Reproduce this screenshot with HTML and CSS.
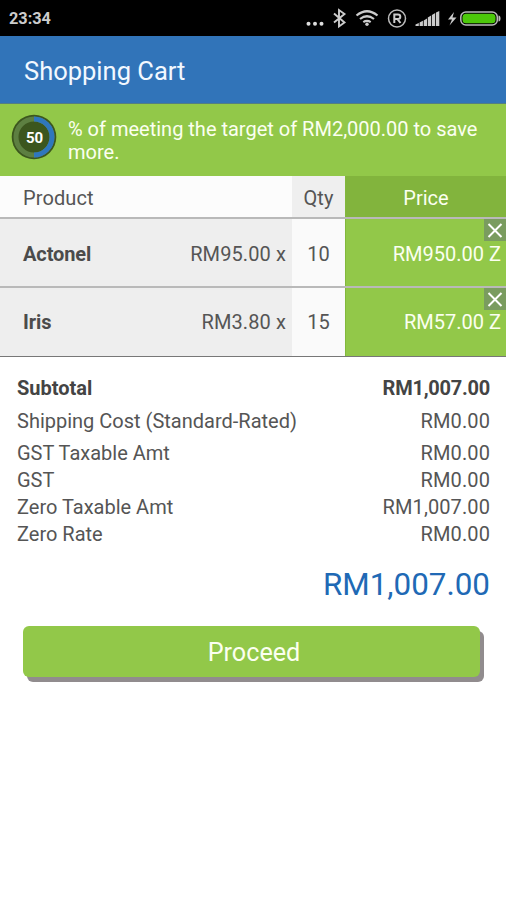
FILE: index.html
```html
<!DOCTYPE html>
<html lang="en">
<head>
<meta charset="utf-8">
<title>Shopping Cart</title>
<link rel="stylesheet" href="styles.css">
</head>
<body>
<div class="status">
  <span class="clock">23:34</span>
  <svg class="status-icons" width="200" height="36" viewBox="0 0 200 36" fill="none">
    <g fill="#ddd"><circle cx="2.500" cy="23.800" r="2"/><circle cx="9" cy="23.800" r="2"/><circle cx="15.500" cy="23.800" r="2"/></g>
    <path d="M28 13.500l10.500 9-5.500 4V10l5.500 4-10.500 8.500" stroke="#ccc" stroke-width="1.900"/>
    <g stroke="#ccc" stroke-width="2.200"><path d="M50.500 15.500q10.500-8.500 21 0M54 19q7-5.500 14 0M57.300 22.200q3.700-2.500 7.400 0"/></g>
    <circle cx="61" cy="24.200" r="1.700" fill="#ccc"/>
    <circle cx="91" cy="18.500" r="8.500" stroke="#bbb" stroke-width="1.500"/>
    <path d="M88.300 23v-8.500h3.600q2.400 0 2.400 2.300t-2.400 2.300h-3.600m3.200 0l3 3.900" stroke="#ccc" stroke-width="2"/>
    <path d="M109.500 26v-1.500l3.300-1.500v3zM113.600 26v-3.500l3.300-1.700V26zM117.700 26v-5.500l3.300-2V26zM121.800 26v-8.500l3.300-2V26zM125.900 26V15l3.300-2v13zM130 26V12.500l3.300-1.500v15z" fill="#ccc"/>
    <path d="M148 12l-6 7.500h4l-2.500 6 7-8h-4z" fill="#ccc"/>
    <rect x="154.800" y="12" width="36.500" height="13" rx="5" stroke="#bbb" stroke-width="1.500"/>
    <rect x="156.500" y="13.700" width="33" height="9.600" rx="3.500" fill="#4cc80a"/>
    <path d="M192.500 15.500q2 0 2 3t-2 3" fill="#bbb"/>
  </svg>
</div>
<header class="appbar"><h1>Shopping Cart</h1></header>
<section class="banner">
  <svg class="gauge" width="46" height="46" viewBox="0 0 46 46">
    <circle cx="23" cy="23" r="22.300" fill="#3c561e"/>
    <circle cx="23" cy="23" r="18" fill="none" stroke="#5d7f41" stroke-width="5"/>
    <path d="M23 5a18 18 0 0 1 0 36" fill="none" stroke="#2f77bd" stroke-width="5"/>
    <text x="23.500" y="28.500" text-anchor="middle" class="gauge-text">50</text>
  </svg>
  <p>% of meeting the target of RM2,000.00 to save more.</p>
</section>
<main>
  <div class="row head">
    <div class="product"><span>Product</span></div><div class="qty">Qty</div><div class="price">Price</div>
  </div>
  <div class="row">
    <div class="product"><b>Actonel</b><span>RM95.00 x</span></div><div class="qty">10</div>
    <div class="price">RM950.00 Z<svg class="close" width="22" height="22" viewBox="0 0 22 22"><path d="M4.500 5l13 13m0-13l-13 13"/></svg></div>
  </div>
  <div class="row last">
    <div class="product"><b>Iris</b><span>RM3.80 x</span></div><div class="qty">15</div>
    <div class="price">RM57.00 Z<svg class="close" width="22" height="22" viewBox="0 0 22 22"><path d="M4.500 5l13 13m0-13l-13 13"/></svg></div>
  </div>
  <section class="summary">
    <div class="line subtotal"><span>Subtotal</span><span class="amount">RM1,007.00</span></div>
    <div class="line shipping"><span>Shipping Cost (Standard-Rated)</span><span>RM0.00</span></div>
    <div class="line"><span>GST Taxable Amt</span><span>RM0.00</span></div>
    <div class="line"><span>GST</span><span>RM0.00</span></div>
    <div class="line"><span>Zero Taxable Amt</span><span>RM1,007.00</span></div>
    <div class="line"><span>Zero Rate</span><span>RM0.00</span></div>
    <div class="total">RM1,007.00</div>
  </section>
  <button class="proceed">Proceed</button>
</main>
</body>
</html>
```

FILE: styles.css
```css
* { box-sizing: border-box; }
body { margin: 0; min-height: 900px; background: #fff; color: #555; font: 20px/27px Roboto, sans-serif; }
.status { height: 36px; background: #000; display: flex; align-items: center; justify-content: space-between; padding-left: 9px; }
.clock { color: #ccc; font-size: 16.3px; font-weight: 700; padding-top: 1px; }
.status-icons { display: block; }
.appbar { height: 68px; background: #3174b9; border-bottom: 1px solid #547f80; display: flex; align-items: center; padding: 3px 24px 0; }
.appbar h1 { margin: 0; font-size: 25.500px; font-weight: 400; color: #f2f8ff; }
.banner { height: 72px; background: #92c849; display: flex; padding: 10px 0 0 11px; gap: 11px; }
.banner p { margin: 4px 0 0; width: 420px; line-height: 23px; color: #fbfff0; }
.gauge { flex: none; }
.gauge-text { font: 700 15px Roboto, sans-serif; fill: #fff; }
.row { height: 69px; display: grid; grid-template-columns: 292px 53px 161px; border-bottom: 2px solid #b9b9b9; }
.row > div { display: flex; align-items: center; padding-top: 3px; }
.row .product { background: #eee; justify-content: space-between; padding-right: 6px; padding-left: 23px; }
.row .product b { color: #4b4b4b; letter-spacing: -0.1px; }
.row .product span { letter-spacing: 0.1px; }
.row .qty { background: #fafafa; justify-content: center; }
.row .price { position: relative; background: #92c849; color: #fbfff0; justify-content: flex-end; padding-right: 5px; border-left: 1px solid #82b83c; }
.head { height: 43px; }
.head .product { background: #fcfcfc; }
.head .qty { background: #efefef; }
.head .price { background: #82b43d; justify-content: center; padding-right: 0; }
.last { border-bottom: 1px solid #777; }
.last > div { padding-top: 1px; }
.close { position: absolute; top: 0; right: 0; background: #7a9c5f; }
.close path { stroke: #fff; stroke-width: 2; fill: none; }
.summary { padding: 18px 16px 0 17px; }
.line { display: flex; justify-content: space-between; }
.line span:last-child { letter-spacing: 0.1px; }
.subtotal { font-weight: 700; color: #444; margin-bottom: 6px; }
.subtotal .amount:last-child { letter-spacing: -0.25px; }
.shipping { margin-bottom: 5px; }
.total { text-align: right; color: #2069b5; font-size: 31.400px; line-height: 40px; margin-top: 17px; }
.proceed { display: block; width: 457px; height: 51px; margin: 21px 0 0 23px; border: 0; border-radius: 6px; background: #92c849; box-shadow: 4px 5px 0 #918c8e; color: #fbfff0; font: 25.200px Roboto, sans-serif; padding: 2px 0 0 5px; }
```
